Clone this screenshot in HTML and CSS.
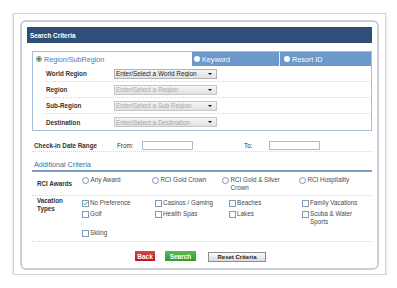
FILE: index.html
```html
<!DOCTYPE html>
<html>
<head>
<meta charset="utf-8">
<link rel="stylesheet" href="styles.css">
</head>
<body>
<div class="frame">
  <div class="panel">
    <div class="header">Search Criteria</div>
    <div class="content">
      <div class="region-box">
        <div class="tabs">
          <div class="tab tab-active"><span class="tab-radio on"></span>Region/SubRegion</div>
          <div class="tab tab-blue tab-keyword"><span class="tab-radio"></span>Keyword</div>
          <div class="tab tab-blue tab-resort"><span class="tab-radio"></span>Resort ID</div>
        </div>
        <div class="field-row">
          <span class="field-label">World Region</span>
          <div class="select"><span class="select-text">Enter/Select a World Region</span><span class="arrow"></span></div>
        </div>
        <div class="field-row">
          <span class="field-label">Region</span>
          <div class="select disabled"><span class="select-text">Enter/Select a Region</span><span class="arrow"></span></div>
        </div>
        <div class="field-row">
          <span class="field-label">Sub-Region</span>
          <div class="select disabled"><span class="select-text">Enter/Select a Sub Region</span><span class="arrow"></span></div>
        </div>
        <div class="field-row">
          <span class="field-label">Destination</span>
          <div class="select disabled"><span class="select-text">Enter/Select a Destination</span><span class="arrow"></span></div>
        </div>
      </div>

      <div class="date-row">
        <span class="date-label">Check-in Date Range</span>
        <span class="date-lbl">From:</span>
        <span class="date-input"></span>
        <span class="date-gap"></span>
        <span class="date-lbl">To:</span>
        <span class="date-input"></span>
      </div>

      <div class="section-title">Additional Criteria</div>

      <div class="crit-row awards">
        <div class="crit-label">RCI Awards</div>
        <div class="opts awards-grid">
          <div class="opt"><span class="radio"></span><span class="opt-text">Any Award</span></div>
          <div class="opt"><span class="radio"></span><span class="opt-text">RCI Gold Crown</span></div>
          <div class="opt"><span class="radio"></span><span class="opt-text">RCI Gold &amp; Silver Crown</span></div>
          <div class="opt"><span class="radio"></span><span class="opt-text">RCI Hospitality</span></div>
        </div>
      </div>

      <div class="crit-row vacation">
        <div class="crit-label">Vacation Types</div>
        <div class="opts vacation-grid">
          <div class="opt"><span class="check on"><svg viewBox="0 0 7 7" width="5" height="5"><path d="M0.8 3.6 L2.6 5.4 L6.2 1.2" fill="none" stroke="#2c9a2c" stroke-width="1.3"/></svg></span><span class="opt-text">No Preference</span></div>
          <div class="opt"><span class="check"></span><span class="opt-text">Casinos / Gaming</span></div>
          <div class="opt"><span class="check"></span><span class="opt-text">Beaches</span></div>
          <div class="opt"><span class="check"></span><span class="opt-text">Family Vacations</span></div>
          <div class="opt"><span class="check"></span><span class="opt-text">Golf</span></div>
          <div class="opt"><span class="check"></span><span class="opt-text">Health Spas</span></div>
          <div class="opt"><span class="check"></span><span class="opt-text">Lakes</span></div>
          <div class="opt"><span class="check"></span><span class="opt-text">Scuba &amp; Water Sports</span></div>
          <div class="opt"><span class="check"></span><span class="opt-text">Skiing</span></div>
        </div>
      </div>

      <div class="buttons">
        <button class="btn btn-back">Back</button>
        <button class="btn btn-search">Search</button>
        <button class="btn btn-reset">Reset Criteria</button>
      </div>
    </div>
  </div>
</div>
</body>
</html>
```

FILE: styles.css
```css
* { box-sizing: border-box; }

body {
  margin: 0;
  background: #ffffff;
  font-family: "Liberation Sans", Arial, sans-serif;
}

.frame {
  margin: 13px 0 0 13px;
  width: 373px;
  border: 1px solid #d3d3d3;
  padding: 6px 6px 4px;
  background: #ffffff;
  box-shadow: 0 1px 3px rgba(0, 0, 0, 0.18);
}

.panel {
  height: 250px;
  border: 2px solid #cdcfd9;
  border-radius: 6px;
  padding: 5px;
  background: #ffffff;
}

.header {
  height: 16px;
  background: #2f4f79;
  color: #ffffff;
  font-weight: bold;
  font-size: 6.4px;
  line-height: 17px;
  padding-left: 3px;
}

.content {
  margin: 8px 0 0 5px;
}

/* region box */
.region-box {
  height: 80px;
  border: 1px solid #a6bfe0;
}

.tabs {
  display: flex;
  height: 14px;
}

.tab {
  display: flex;
  align-items: center;
  font-size: 7.2px;
  white-space: nowrap;
}

.tab-active {
  width: 159px;
  color: #4a79b7;
  padding-left: 3px;
}

.tab-blue {
  background: #6c98cb;
  color: #ffffff;
}

.tab-keyword {
  width: 87px;
  padding-left: 2px;
}

.tab-resort {
  flex: 1;
  padding-left: 4px;
  border-left: 1px solid #e4ecf7;
}

.tab-radio {
  width: 6px;
  height: 6px;
  border-radius: 50%;
  background: #ffffff;
  margin-right: 2px;
  flex: none;
}

.tab-radio.on {
  border: 1px solid #7f9a86;
  background: radial-gradient(circle, #38a238 0, #38a238 1.4px, #ffffff 1.9px);
}

.field-row {
  display: flex;
  align-items: center;
  height: 16px;
  margin: 0 1px 0 12px;
  padding-left: 1px;
  border-bottom: 1px dotted #ddd9bf;
}

.field-row:last-child {
  border-bottom: none;
}

.field-label {
  width: 68px;
  font-size: 6.3px;
  font-weight: bold;
  color: #333333;
}

.select {
  display: flex;
  align-items: center;
  width: 103px;
  height: 10px;
  border: 1px solid #b3b3b3;
  background: linear-gradient(#f4f4f4, #e2e2e2);
  padding: 0 4px 0 1px;
  font-size: 6.4px;
  color: #1e1e1e;
}

.select.disabled {
  color: #a9a9a9;
  border-color: #c6c6c6;
}

.select-text {
  flex: 1;
  white-space: nowrap;
  overflow: hidden;
}

.arrow {
  width: 0;
  height: 0;
  border-left: 2px solid transparent;
  border-right: 2px solid transparent;
  border-top: 2px solid #111111;
}

/* date row */
.date-row {
  display: flex;
  align-items: center;
  height: 21px;
  padding: 8px 0 0 2px;
  border-bottom: 1px dotted #ddd9bf;
}

.date-label {
  width: 83px;
  font-size: 6.3px;
  font-weight: bold;
  color: #333333;
  white-space: nowrap;
}

.date-lbl {
  width: 25px;
  font-size: 6.3px;
  color: #333333;
}

.date-input {
  width: 51px;
  height: 9px;
  border: 1px solid #a9bcd5;
  background: #ffffff;
}

.date-gap {
  width: 51px;
}

/* additional criteria */
.section-title {
  height: 20px;
  padding: 8px 0 0 2px;
  font-size: 7.2px;
  line-height: 10px;
  color: #3b6aa8;
  border-bottom: 2px solid #7e9cc4;
}

.crit-row {
  display: flex;
  border-bottom: 1px dotted #ddd9bf;
}

.crit-row.awards {
  height: 24px;
}

.crit-row.vacation {
  height: 46px;
}

.crit-label {
  width: 50px;
  flex: none;
  padding: 0 8px 0 5px;
  font-size: 6.3px;
  line-height: 8px;
  font-weight: bold;
  color: #333333;
}

.awards .crit-label {
  align-self: center;
}

.vacation .crit-label {
  padding-top: 1px;
}

.opts {
  flex: 1;
  display: grid;
  align-content: start;
}

.awards-grid {
  grid-template-columns: 70px 70px 77px 1fr;
  padding-top: 4px;
}

.vacation-grid {
  grid-template-columns: 73px 74px 73px 1fr;
  row-gap: 3px;
  padding-top: 3px;
}

.opt {
  display: flex;
  align-items: flex-start;
  font-size: 6.3px;
  line-height: 8px;
  color: #4a4a4a;
}

.opt-text {
  max-width: 58px;
}

.radio {
  width: 7px;
  height: 7px;
  flex: none;
  border: 1px solid #7595bf;
  border-radius: 50%;
  background: #ffffff;
  margin: 0.5px 1.5px 0 0;
}

.check {
  width: 7px;
  height: 7px;
  flex: none;
  display: flex;
  align-items: center;
  justify-content: center;
  border: 1px solid #7f9db9;
  background: #ffffff;
  margin: 0.5px 1px 0 0;
}

/* buttons */
.buttons {
  display: flex;
  align-items: flex-start;
  justify-content: center;
  padding: 9px 3px 0 0;
}

.btn {
  display: flex;
  align-items: center;
  justify-content: center;
  height: 10px;
  padding: 0;
  border: 0;
  font-family: "Liberation Sans", Arial, sans-serif;
  font-weight: bold;
  font-size: 6.5px;
  color: #ffffff;
}

.btn-back {
  width: 20px;
  margin-right: 10px;
  background: linear-gradient(#d8444a, #b8161d);
}

.btn-search {
  width: 31px;
  margin-right: 12px;
  background: linear-gradient(#57bd4f, #2f9b2a);
}

.btn-reset {
  width: 58px;
  margin-top: 1px;
  border: 1px solid #8e8e8e;
  background: linear-gradient(#fbfbfb, #dadada);
  color: #222222;
  font-size: 6px;
}
```
